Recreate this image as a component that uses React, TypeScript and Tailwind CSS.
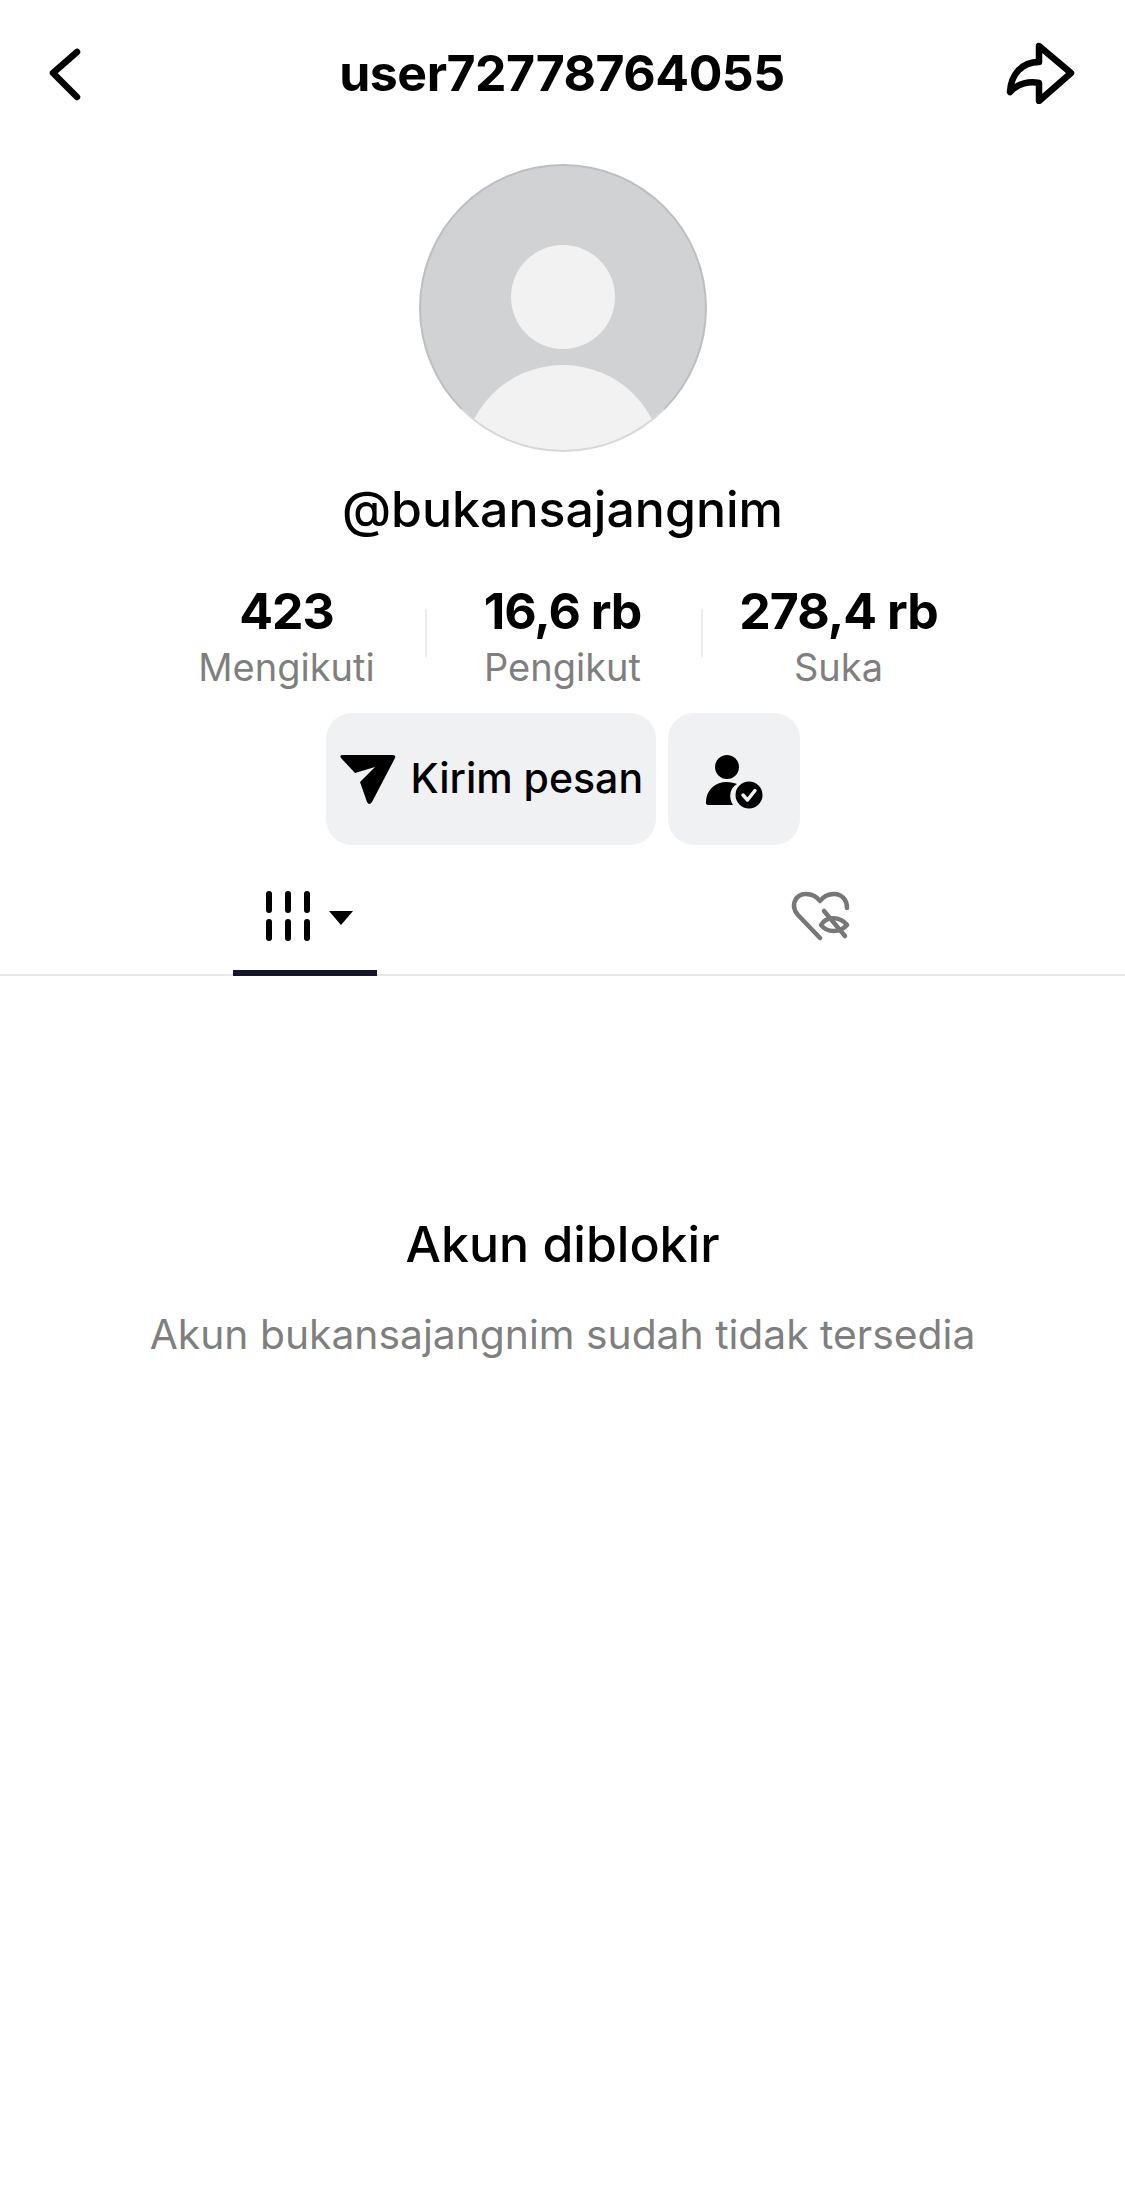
const font = "font-['Inter','Liberation_Sans',sans-serif]"

const stats = [
    { value: '423', label: 'Mengikuti' },
    { value: '16,6 rb', label: 'Pengikut' },
    { value: '278,4 rb', label: 'Suka' },
]

const App = () => {
    return (
        <div className={`${font} w-[1125px] h-[2187px] bg-white text-black flex flex-col items-center overflow-hidden`}>
            {/* header */}
            <div className="w-full h-[146px] grid grid-cols-[1fr_auto_1fr] items-center pl-[40px] pr-[50px]">
                <svg width="50" height="60" viewBox="0 0 50 60" fill="none" stroke="#000" strokeWidth="6.500" strokeLinecap="round" strokeLinejoin="round">
                    <path d="M37 9 L13 30 L37 54" />
                </svg>
                <div className="text-[50px] font-bold leading-none tracking-[-0.5px] ml-[9px]">user72778764055</div>
                <svg className="justify-self-end" width="70" height="62" viewBox="0 0 70 62" fill="none" stroke="#000" strokeWidth="6.500" strokeLinecap="round" strokeLinejoin="round">
                    <path d="M34 4 L66 31 L34 59 L34 41 C25 39 13 41 5 50 C6 33 16 20 34 20 Z" />
                </svg>
            </div>

            {/* avatar */}
            <div className="relative w-[288px] h-[288px] mt-[18px] rounded-full bg-[#d0d2d4] border-2 border-[#bcbec0] border-b-[#d8d8d8] overflow-hidden shrink-0">
                <div className="absolute left-[90px] top-[79px] w-[104px] h-[104px] rounded-full bg-[#f2f2f2]" />
                <div className="absolute left-[42px] top-[199px] w-[200px] h-[200px] rounded-full bg-[#f2f2f2]" />
            </div>

            <div className="mt-[30px] text-[50px] font-medium leading-[54px]">@bukansajangnim</div>

            {/* stats */}
            <div className="mt-[49px] flex items-start">
                {stats.map((s, i) => (
                    <div key={s.label} className="relative w-[276px] flex flex-col items-center">
                        <div className="text-[50px] font-bold leading-[52px] tracking-[-1px]">{s.value}</div>
                        <div className="mt-[5px] text-[38px] leading-[50px] text-[#7f7f7f]">{s.label}</div>
                        {i > 0 && <div className="absolute left-0 top-[24px] w-[2px] h-[48px] bg-[#ececec]" />}
                    </div>
                ))}
            </div>

            {/* buttons */}
            <div className="mt-[21px] flex gap-[12px]">
                <div className="w-[330px] h-[132px] rounded-[26px] bg-[#f0f1f3] flex items-center pl-[14px] gap-[15px]">
                    <svg className="mt-[2px]" width="56" height="50" viewBox="0 0 56 50" fill="#000">
                        <path d="M1 3 Q-1 0 3 0 L53 0 Q56 0 55 3 L32 47 Q29 51 27 47 L20 27 L35 12 L15 18 Z" />
                    </svg>
                    <div className="text-[41px] font-medium leading-none whitespace-nowrap -mt-[2px]">Kirim pesan</div>
                </div>
                <div className="w-[132px] h-[132px] rounded-[26px] bg-[#f0f1f3] flex items-center justify-center">
                    <svg className="mt-[8px] ml-[2px]" width="60" height="56" viewBox="0 0 60 56">
                        <circle cx="22" cy="12" r="12" fill="#000" />
                        <path d="M1 48 C1 34 11 27 22 27 C26 27 29 28 32 29 C25 33 23 42 28 50 L4 50 Q1 50 1 48 Z" fill="#000" />
                        <circle cx="44" cy="40" r="13.500" fill="#000" />
                        <path d="M38 40 L42.500 45 L50 35.500" fill="none" stroke="#f0f1f3" strokeWidth="3.500" strokeLinecap="round" strokeLinejoin="round" />
                    </svg>
                </div>
            </div>

            {/* tabs */}
            <div className="mt-[30px] w-full h-[101px] border-b-2 border-[#e8e8e8] relative flex">
                <div className="absolute left-[233px] bottom-[-2px] w-[144px] h-[6px] bg-[#16162a]" />
                <div className="pl-[265px] pt-[16px] flex items-start">
                    <svg width="46" height="50" viewBox="0 0 46 50" fill="#000">
                        <rect x="1" y="0" width="6" height="22" rx="3" /><rect x="20" y="0" width="6" height="22" rx="3" /><rect x="39" y="0" width="6" height="22" rx="3" />
                        <rect x="1" y="28" width="6" height="22" rx="3" /><rect x="20" y="28" width="6" height="22" rx="3" /><rect x="39" y="28" width="6" height="22" rx="3" />
                    </svg>
                    <svg className="ml-[17px] mt-[19px]" width="26" height="16" viewBox="0 0 26 16" fill="#000">
                        <path d="M1 1 L25 1 L13 15 Z" />
                    </svg>
                </div>
                <div className="pl-[437px] pt-[16px]">
                    <svg width="62" height="52" viewBox="0 0 62 52" fill="none" stroke="#777" strokeWidth="4.500" strokeLinecap="round" strokeLinejoin="round">
                        <path d="M29 47 L7 24 C-1 15 4 3 15 3 C22 3 26 6 29 10 C32 6 36 3 43 3 C51 3 56 9 56 17" />
                        <path d="M30 34 C35 25 49 25 56 34 C49 42 36 42 30 34 Z" />
                        <path d="M33 20 L54 45" />
                    </svg>
                </div>
            </div>

            {/* blocked */}
            <div className="mt-[240px] text-[50px] font-medium leading-[56px]">Akun diblokir</div>
            <div className="mt-[37px] text-[40.800px] leading-[50px] text-[#7f7f7f]">Akun bukansajangnim sudah tidak tersedia</div>
        </div>
    )
}

export default App
